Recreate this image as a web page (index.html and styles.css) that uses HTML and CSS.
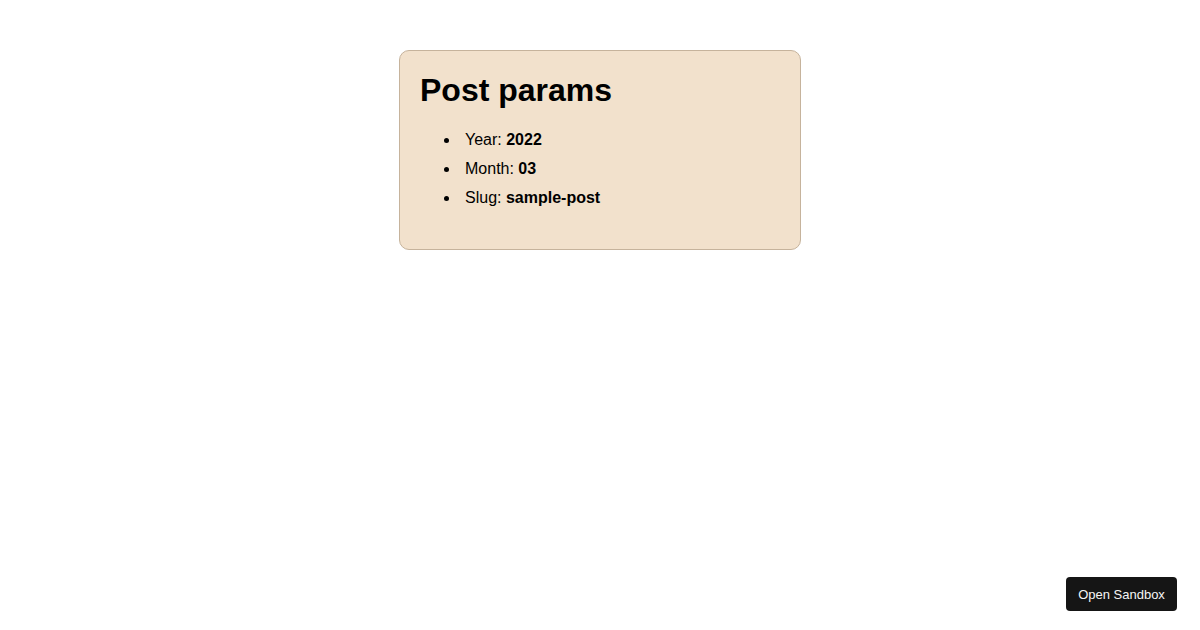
FILE: index.html
```html
<!DOCTYPE html>
<html>
<head>
<meta charset="utf-8">
<link rel="stylesheet" href="styles.css">
</head>
<body>
<div class="card">
  <h1 class="title">Post params</h1>
  <ul class="params">
    <li>Year: <b>2022</b></li>
    <li>Month: <b>03</b></li>
    <li>Slug: <b>sample-post</b></li>
  </ul>
</div>
<button class="sandbox">Open Sandbox</button>
</body>
</html>
```
FILE: styles.css
```css
html, body { margin: 0; padding: 0; background: #fff; }
body { font-family: "Liberation Sans", Arial, sans-serif; color: #000; }
.card {
  width: 360px;
  margin: 50px auto 0;
  padding: 21px 20px 20px;
  background: #f2e1cc;
  border: 1px solid #c6b39c;
  border-radius: 10px;
}
.title { margin: 0; font-size: 32px; font-weight: bold; line-height: 37px; }
.params { margin: 17px 0 17px; padding-left: 40px; font-size: 16px; line-height: 28.8px; }
.params li { padding-left: 5px; }
.sandbox {
  position: fixed;
  right: 23px;
  bottom: 19px;
  width: 111px;
  height: 34px;
  padding: 0;
  border: none;
  border-radius: 4px;
  background: #151515;
  color: #f5f5f5;
  font-family: "Liberation Sans", Arial, sans-serif;
  font-size: 13px;
}
```
